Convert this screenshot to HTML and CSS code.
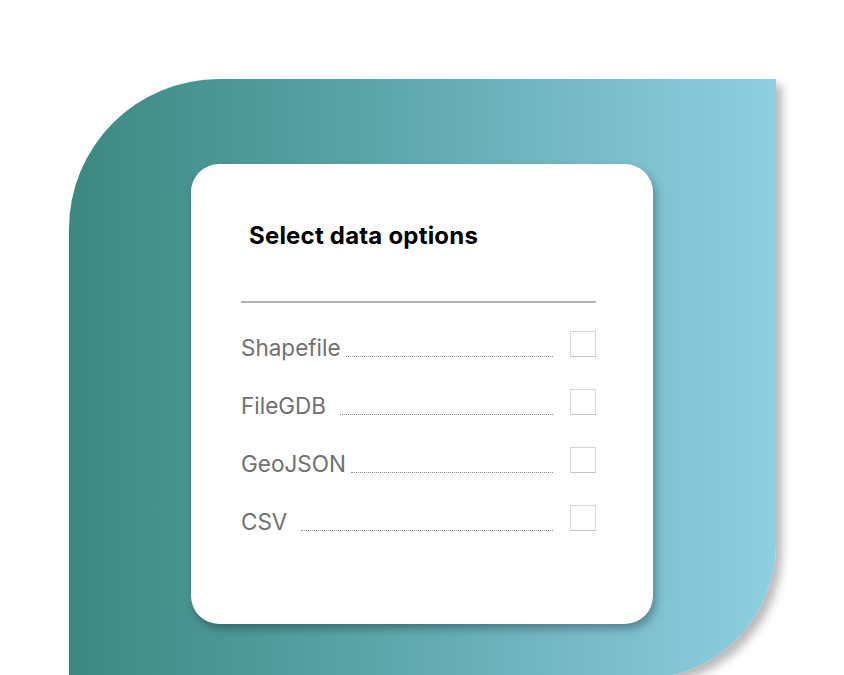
FILE: index.html
```html
<!DOCTYPE html>
<html lang="en">

<head>
    <meta charset="UTF-8">
    <meta name="viewport" content="width=device-width, initial-scale=1.0">
    <title>Select data options</title>

    <link rel="stylesheet" href="styles.css">
</head>

<body>
    <main class="stage">
        <div class="panel">
            <section class="kort">
                <h1>Select data options</h1>
                <hr class="skille">

                <ul class="valg">
                    <li class="raekke">
                        <span class="navn">Shapefile</span>
                        <span class="prikker"></span>
                        <span class="boks"></span>
                    </li>
                    <li class="raekke">
                        <span class="navn bred">FileGDB</span>
                        <span class="prikker"></span>
                        <span class="boks"></span>
                    </li>
                    <li class="raekke">
                        <span class="navn">GeoJSON</span>
                        <span class="prikker"></span>
                        <span class="boks"></span>
                    </li>
                    <li class="raekke">
                        <span class="navn bred">CSV</span>
                        <span class="prikker"></span>
                        <span class="boks"></span>
                    </li>
                </ul>
            </section>
        </div>
    </main>
</body>

</html>
```

FILE: styles.css
```css
body {
    margin: 0;
    background-color: #ffffff;
    overflow: hidden;
}

.stage {
    padding: 79px 0 0 69px;
    height: 675px;
    box-sizing: border-box;
}

/* den store teal form bag kortet */
.panel {
    width: 707px;
    height: 600px;
    padding: 85px 0 0 122px;
    box-sizing: border-box;
    border-radius: 150px 0 135px 0;
    background: linear-gradient(90deg, #3c8880 0%, #54a0a2 35%, #75b8c6 70%, #8fd0e0 100%);
    box-shadow: 6px 6px 10px rgba(0, 0, 0, 0.28);
}

.kort {
    width: 462px;
    height: 460px;
    box-sizing: border-box;
    padding: 57px 57px 0 50px;
    background-color: #ffffff;
    border-radius: 28px;
    box-shadow: 3px 5px 8px rgba(0, 0, 0, 0.3);
}

h1 {
    margin: 0 0 0 8px;
    font-family: 'Inter', sans-serif;
    font-weight: 700;
    font-size: 24px;
    line-height: 30px;
    letter-spacing: 0.2px;
    color: #000000;
}

.skille {
    margin: 50px 0 0 0;
    border: none;
    height: 2px;
    background-color: #b3b3b3;
}

.valg {
    list-style: none;
    margin: 0;
    padding: 0;
}

.raekke {
    display: flex;
    align-items: flex-end;
    height: 58px;
}

.navn {
    font-family: 'Inter', sans-serif;
    font-size: 22.5px;
    line-height: 26px;
    color: #707070;
    margin-right: 5px;
}

.navn.bred {
    margin-right: 14px;
}

.prikker {
    flex: 1;
    border-bottom: 1px dotted #8a8a8a;
    margin-bottom: 4px;
}

.boks {
    width: 24px;
    height: 24px;
    margin-left: 17px;
    margin-bottom: 4px;
    border: 1px solid #d6d6d6;
    border-bottom-color: #c4c4c4;
}
```
